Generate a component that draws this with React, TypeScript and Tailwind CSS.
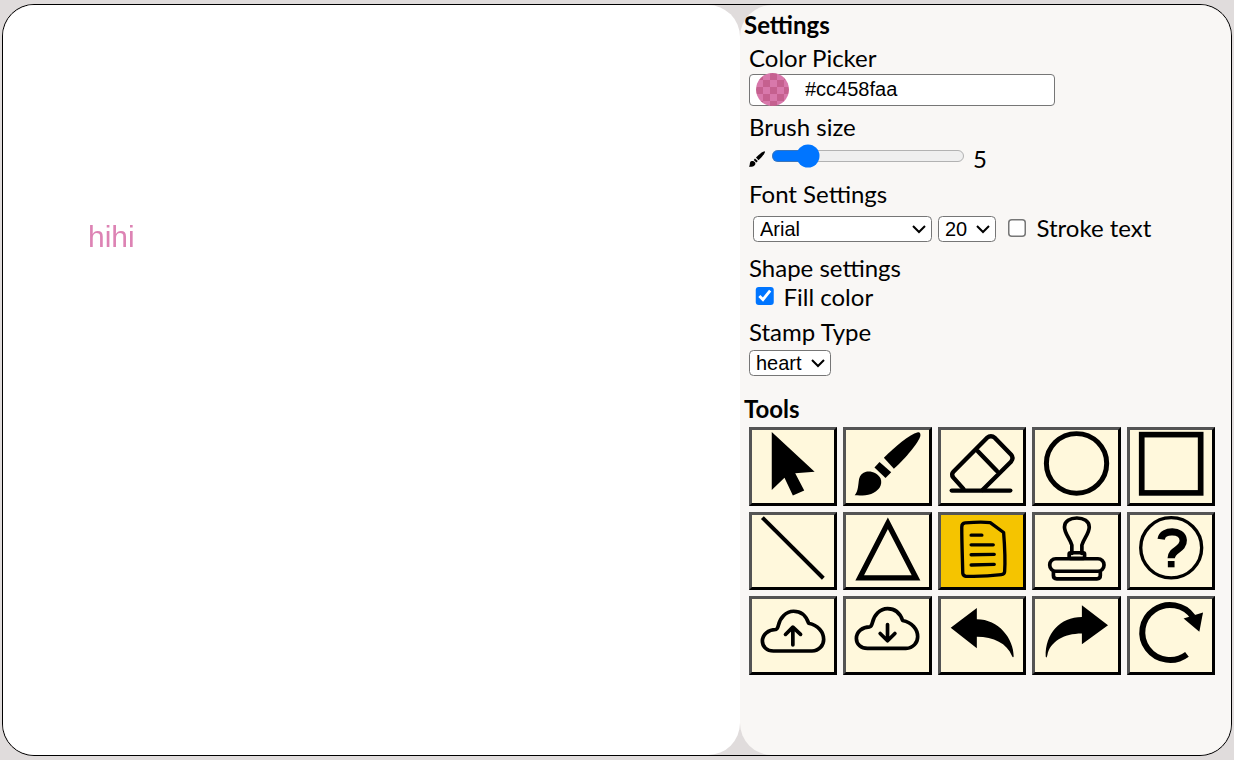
import React from 'react';

// Paths are traced in a 3x grid of the toolbar, so each icon's viewBox is its button's origin in that grid.
const BrushShape = () => (
  <>
    <path d="M518 31C490 38 450 75 416 108L446 141C480 110 520 62 525 42C526 34 523 30 518 31Z" />
    <path d="M403 121L438 152L421 169L388 137Z" />
    <path d="M363 150C380 147 398 155 406 170C414 190 400 210 378 217C362 222 345 222 329 221C340 208 339 190 342 172C345 160 352 153 363 150Z" />
  </>
);

const cloud = 'M85 690H200C222 690 235 672 235 655C235 632 218 612 190 606C182 582 165 570 145 570C122 570 105 590 100 612C98 620 96 624 92 625C70 625 52 640 52 660C52 678 66 690 85 690Z';

type Tool = { name: string; box: string; active?: boolean; icon: React.ReactNode };

const line = { fill: 'none', stroke: 'black', strokeLinecap: 'round', strokeLinejoin: 'round' } as const;

const TOOLS: Tool[] = [
  { name: 'select', box: '21 24', icon: <path d="M80 30L208 150L150 155L177 207L143 222L118 168L80 205Z" /> },
  { name: 'brush', box: '303 24', icon: <BrushShape /> },
  {
    name: 'eraser',
    box: '588 24',
    icon: (
      <g {...line} strokeWidth="13">
        <path d="M655 202L625 168Q617 158 625 150L725 48Q737 38 749 48L797 98Q806 108 797 120L712 205" />
        <path d="M698 88L755 148" />
        <path d="M620 207H795" />
      </g>
    ),
  },
  { name: 'circle', box: '30 24', icon: <circle cx="154" cy="125" r="90" fill="none" stroke="black" strokeWidth="15" /> },
  { name: 'rect', box: '315 24', icon: <rect x="350" y="38" width="176" height="176" fill="none" stroke="black" strokeWidth="17" /> },
  { name: 'line', box: '21 279', icon: <path d="M52 287L234 470" {...line} strokeLinecap="butt" strokeWidth="12" /> },
  { name: 'triangle', box: '303 279', icon: <path d="M428 304L344 469H512Z" fill="none" stroke="black" strokeWidth="16" /> },
  {
    name: 'text',
    box: '588 279',
    active: true,
    icon: (
      <g {...line} strokeWidth="10">
        <path d="M660 303C690 300 720 300 735 302L775 332C778 370 780 420 778 450Q778 458 768 459C730 464 690 465 662 464Q654 463 653 455C652 410 650 360 650 315Q650 304 660 303Z" />
        <path d="M678 340H710M678 369H744M678 399L747 398M678 430L747 428" />
      </g>
    ),
  },
  {
    name: 'stamp',
    box: '30 279',
    icon: (
      <g {...line} strokeWidth="11">
        <path d="M140 395V370C135 350 118 335 118 315C118 297 135 288 155 288C175 288 192 297 192 315C192 335 175 350 170 370V395" />
        <rect x="132" y="393" width="46" height="17" rx="4" />
        <rect x="74" y="411" width="162" height="38" rx="18" />
        <path d="M85 450V462Q85 472 95 472H215Q225 472 225 462V450" />
      </g>
    ),
  },
  {
    name: 'help',
    box: '315 279',
    icon: (
      <>
        <circle cx="438" cy="378" r="91" fill="none" stroke="black" strokeWidth="10" />
        <path d="M408 352C412 322 472 322 474 355C475 385 438 382 438 410" fill="none" stroke="black" strokeWidth="22" />
        <rect x="428" y="418" width="20" height="19" />
      </>
    ),
  },
  {
    name: 'upload',
    box: '21 531',
    icon: (
      <g {...line} strokeWidth="11">
        <path d={cloud} transform="translate(0 -2)" />
        <path d="M143 618V670M121 638L143 616L166 638" />
      </g>
    ),
  },
  {
    name: 'download',
    box: '303 531',
    icon: (
      <g {...line} strokeWidth="11">
        <path d={cloud} transform="translate(282 -10)" />
        <path d="M427 608V655M405 635L427 657L449 635" />
      </g>
    ),
  },
  { name: 'undo', box: '588 531', icon: <path d="M617 618L695 558V592C760 592 805 650 805 705Q803 710 800 703C785 665 745 645 695 645V680Z" /> },
  { name: 'redo', box: '30 531', icon: <path d="M248 610L170 550V585C105 585 60 635 62 705Q64 712 67 700C75 660 115 635 170 635V668Z" /> },
  {
    name: 'clear',
    box: '315 531',
    icon: (
      <>
        <path d="M485 698A83 83 0 1 1 503 585" fill="none" stroke="black" strokeWidth="18" />
        <path d="M533 572L475 590L522 630Z" />
      </>
    ),
  },
];

function App() {
  return (
    <div className="h-screen bg-[#e0dcdc] px-[2px] py-[4px] font-['Lato',sans-serif] text-[24px] leading-[29px] text-black">
      <div className="flex h-full rounded-[32px] border border-black">
        <div className="relative w-[737px] rounded-[32px] bg-white">
          <span className="absolute left-[85px] top-[215px] font-['Liberation_Sans',Arial,sans-serif] text-[30px] leading-[34px] text-[#cc458faa] blur-[0.6px]">
            hihi
          </span>
        </div>

        <div className="flex-1 rounded-[32px] bg-[#f9f7f5] pl-[4px] pt-[5px]">
          <h2 className="font-bold">Settings</h2>

          <div className="pl-[5px]">
            <div className="mt-[4px]">Color Picker</div>
            <div className="mt-[2px] flex h-[32px] w-[306px] items-center rounded-[4px] border border-[#767676] bg-white pl-[6px]">
              <span className="-mt-[2px] size-[33px] shrink-0 rounded-full bg-[repeating-conic-gradient(#d878ab_0_25%,#c5608f_0_50%)] bg-[length:14px_14px]" />
              <input
                readOnly
                value="#cc458faa"
                className="-mt-[2px] ml-[16px] w-[220px] font-['Liberation_Sans',Arial,sans-serif] text-[20px] leading-[24px] outline-none"
              />
            </div>

            <div className="mt-[6px]">Brush size</div>
            <div className="flex h-[30px] items-center">
              <svg viewBox="330 30 196 192" className="mt-[6px] size-[16px] shrink-0">
                <BrushShape />
              </svg>
              <input type="range" min={1} max={28} defaultValue={5} className="ml-[4px] w-[129.4px] [zoom:1.5]" />
              <span className="ml-[8px] mt-[5px]">5</span>
            </div>

            <div className="mt-[8px]">Font Settings</div>
            <div className="mt-[8px] flex h-[25px] items-center pl-[4px]">
              <select className="w-[119.3px] rounded-[3px] border border-[#767676] bg-white font-['Liberation_Sans',Arial,sans-serif] text-[13.333px] [zoom:1.5]">
                <option>Arial</option>
              </select>
              <select className="ml-[4px] w-[38.7px] rounded-[3px] border border-[#767676] bg-white font-['Liberation_Sans',Arial,sans-serif] text-[13.333px] [zoom:1.5]">
                <option>20</option>
              </select>
              <input type="checkbox" className="ml-[8px] mr-0 size-[13px] appearance-auto [zoom:1.5]" />
              <span className="mb-[2px] ml-[9px]">Stroke text</span>
            </div>

            <div className="mt-[12px]">Shape settings</div>
            <div className="flex items-center pl-[6px]">
              <input type="checkbox" defaultChecked className="size-[13px] appearance-auto [zoom:1.5]" />
              <span className="ml-[9px]">Fill color</span>
            </div>

            <div className="mt-[6px]">Stamp Type</div>
            <select className="mt-[2.7px] block w-[54.7px] rounded-[3px] border border-[#767676] bg-white font-['Liberation_Sans',Arial,sans-serif] text-[13.333px] [zoom:1.5]">
              <option>heart</option>
            </select>
          </div>

          <h2 className="mt-[18px] font-bold">Tools</h2>

          <div className="mt-[4px] grid grid-cols-[repeat(5,88.4px)] gap-x-[6px] gap-y-[6px] pl-[5px]">
            {TOOLS.map((tool) => (
              <button
                key={tool.name}
                title={tool.name}
                className={`h-[78.5px] w-[88.4px] border-[3px] border-black [border-style:outset] ${tool.active ? 'bg-[#f5c400]' : 'bg-[#fff8dc]'}`}
              >
                <svg viewBox={`${tool.box} 246 219`} preserveAspectRatio="none" className="block h-full w-full">
                  {tool.icon}
                </svg>
              </button>
            ))}
          </div>
        </div>
      </div>
    </div>
  );
}

export default App;
